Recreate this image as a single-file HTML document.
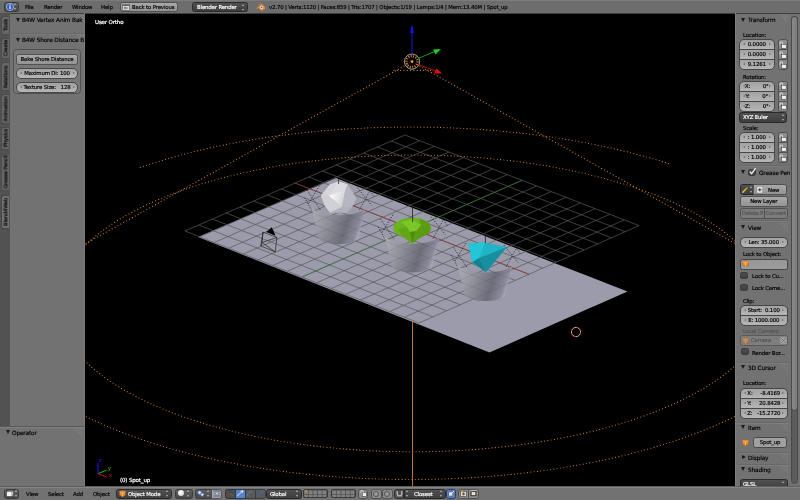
<!DOCTYPE html>
<html><head><meta charset="utf-8"><title>Blender</title>
<style>
html,body{margin:0;padding:0;background:#727272;}
body{width:800px;height:500px;overflow:hidden;position:relative;font-family:"DejaVu Sans","Liberation Sans",sans-serif;font-size:5.4px;letter-spacing:-0.15px;color:#000;line-height:1;-webkit-text-stroke:0.17px currentColor}
div,span{box-sizing:border-box}
.a{position:absolute;white-space:nowrap}
.t{will-change:transform;position:absolute;white-space:nowrap;height:8px;line-height:8px}
.hdr{position:absolute;left:0;width:800px;height:14px;background:#727272}
.panel{position:absolute;background:#727272}
.w{will-change:transform;position:absolute;border:1px solid #474747;text-align:center;white-space:nowrap;overflow:hidden}
.num{background:linear-gradient(#a2a2a2,#b6b6b6);border-radius:5px}
.btn{background:linear-gradient(#a8a8a8,#949494);border-radius:2.5px;border-color:#515151}
.menu{background:linear-gradient(#505050,#3e3e3e);border-radius:2.5px;color:#fff;border-color:#2a2a2a}
.txt{background:linear-gradient(#969696,#9c9c9c);border-radius:2.5px}
.w span{position:absolute;left:0;right:0;top:0;bottom:0;display:block}
.chk{position:absolute;width:8px;height:7.5px;border:1px solid #3c3c3c;border-radius:2px;background:linear-gradient(#4e4e4e,#404040)}
.tab{position:absolute;left:1px;width:8.2px;border:1px solid #4c4c4c;border-right:none;border-radius:2.5px 0 0 2.5px;background:#666}
.tab i{will-change:transform;position:absolute;left:50%;top:50%;font-style:normal;white-space:nowrap;transform:translate(-50%,-50%) rotate(-90deg);font-size:5.2px}
.tri{position:absolute;width:0;height:0;border-left:2.7px solid transparent;border-right:2.7px solid transparent;border-top:4.4px solid #1a1a1a}
.trir{position:absolute;width:0;height:0;border-top:2.4px solid transparent;border-bottom:2.4px solid transparent;border-left:4px solid #1a1a1a}
.sep{position:absolute;height:1px;background:#666}
.grip{position:absolute;width:10px;height:10px;background:repeating-linear-gradient(45deg,transparent 0,transparent 1.5px,#8a8a8a 1.5px,#8a8a8a 2.2px);clip-path:polygon(0 0,100% 0,100% 100%);opacity:.75}
.ud{position:absolute;width:4px;height:8px}
.ud:before,.ud:after{content:"";position:absolute;left:0;border-left:1.8px solid transparent;border-right:1.8px solid transparent}
.ud:before{top:0.5px;border-bottom:2.6px solid #b4b4b4}
.ud:after{bottom:0.5px;border-top:2.6px solid #b4b4b4}
.al,.ar{position:absolute;top:50%;width:0;height:0;margin-top:-1.6px;border-top:1.6px solid transparent;border-bottom:1.6px solid transparent}
.al{left:2.5px;border-right:2.2px solid #6a6a6a}
.ar{right:2.5px;border-left:2.2px solid #6a6a6a}

</style></head>
<body>
<svg id="scene" width="651" height="474" viewBox="85 13 651 474" style="position:absolute;left:85px;top:13px;will-change:transform">
<defs>
<linearGradient id="cg" x1="0" y1="0" x2="1" y2="0.25"><stop offset="0" stop-color="#b0b0b9"/><stop offset="0.35" stop-color="#94949e"/><stop offset="0.72" stop-color="#6e6e7a"/><stop offset="0.93" stop-color="#8a8a9a"/><stop offset="1" stop-color="#a8a8ba"/></linearGradient>
<radialGradient id="sg" cx="0.38" cy="0.38" r="0.7"><stop offset="0" stop-color="#fafafa"/><stop offset="0.45" stop-color="#d4d4d8"/><stop offset="1" stop-color="#9a9aa4"/></radialGradient>
<linearGradient id="sf" x1="0" y1="0.3" x2="1" y2="0.7"><stop offset="0" stop-color="#ffffff"/><stop offset="1" stop-color="#cdcdd2"/></linearGradient>
</defs>
<rect x="85" y="13" width="652" height="474" fill="#000"/>
<polygon points="198,237 336,178 627.5,291.5 489.5,352.5" fill="#9b9bac"/>
<g stroke="#585858" stroke-width="0.7"><line x1="185.0" y1="231.0" x2="419.0" y2="323.0"/><line x1="185.0" y1="231.0" x2="405.0" y2="135.0"/><line x1="198.8" y1="225.0" x2="432.8" y2="316.9"/><line x1="199.6" y1="236.8" x2="419.6" y2="140.7"/><line x1="212.5" y1="219.0" x2="446.5" y2="310.8"/><line x1="214.2" y1="242.5" x2="434.2" y2="146.3"/><line x1="226.2" y1="213.0" x2="460.2" y2="304.7"/><line x1="228.9" y1="248.2" x2="448.9" y2="152.0"/><line x1="240.0" y1="207.0" x2="474.0" y2="298.6"/><line x1="243.5" y1="254.0" x2="463.5" y2="157.7"/><line x1="253.8" y1="201.0" x2="487.8" y2="292.6"/><line x1="258.1" y1="259.8" x2="478.1" y2="163.3"/><line x1="267.5" y1="195.0" x2="501.5" y2="286.5"/><line x1="272.8" y1="265.5" x2="492.8" y2="169.0"/><line x1="281.2" y1="189.0" x2="515.2" y2="280.4"/><line x1="287.4" y1="271.2" x2="507.4" y2="174.6"/><line x1="295.0" y1="183.0" x2="529.0" y2="274.3"/><line x1="302.0" y1="277.0" x2="522.0" y2="180.3"/><line x1="308.8" y1="177.0" x2="542.8" y2="268.2"/><line x1="316.6" y1="282.8" x2="536.6" y2="186.0"/><line x1="322.5" y1="171.0" x2="556.5" y2="262.1"/><line x1="331.2" y1="288.5" x2="551.2" y2="191.6"/><line x1="336.2" y1="165.0" x2="570.2" y2="256.0"/><line x1="345.9" y1="294.2" x2="565.9" y2="197.3"/><line x1="350.0" y1="159.0" x2="584.0" y2="249.9"/><line x1="360.5" y1="300.0" x2="580.5" y2="202.9"/><line x1="363.8" y1="153.0" x2="597.8" y2="243.9"/><line x1="375.1" y1="305.8" x2="595.1" y2="208.6"/><line x1="377.5" y1="147.0" x2="611.5" y2="237.8"/><line x1="389.8" y1="311.5" x2="609.8" y2="214.3"/><line x1="391.2" y1="141.0" x2="625.2" y2="231.7"/><line x1="404.4" y1="317.2" x2="624.4" y2="219.9"/><line x1="405.0" y1="135.0" x2="639.0" y2="225.6"/><line x1="419.0" y1="323.0" x2="639.0" y2="225.6"/></g>
<line x1="295.0" y1="183.0" x2="529.0" y2="274.3" stroke="#9a2a2a" stroke-width="0.65"/>
<line x1="302.0" y1="277.0" x2="522.0" y2="180.3" stroke="#2c7c2c" stroke-width="0.65"/>
<g stroke="#111" stroke-width="0.6" fill="none"><polygon points="263,232.1 277,237.5 275.2,251.9 260.8,246"/><path d="M263,232.1 L262,242.5 L260.8,246 M262,242.5 L277,237.5 M262,242.5 L275.2,251.9"/></g>
<polygon points="271.8,227.2 266.2,232.1 275.6,235.7" fill="#000"/>
<g stroke="#1a1a1a" stroke-width="0.7" stroke-dasharray="1.4 1.4"><line x1="307" y1="190" x2="320.8" y2="210.4"/><line x1="357.4" y1="187.6" x2="371.8" y2="205.6"/><line x1="369.5" y1="191.6" x2="359.5" y2="209.6"/><line x1="319.5" y1="185.6" x2="308.5" y2="203.6"/><line x1="304.5" y1="197.6" x2="312.5" y2="211.6"/><line x1="365.5" y1="183.6" x2="374.5" y2="197.6"/><line x1="380.5" y1="219" x2="394.3" y2="239.4"/><line x1="430.9" y1="216.6" x2="445.3" y2="234.6"/><line x1="443" y1="220.6" x2="433" y2="238.6"/><line x1="393" y1="214.6" x2="382" y2="232.6"/><line x1="378" y1="226.6" x2="386" y2="240.6"/><line x1="439" y1="212.6" x2="448" y2="226.6"/><line x1="453.5" y1="247.4" x2="467.3" y2="267.8"/><line x1="503.9" y1="245" x2="518.3" y2="263"/><line x1="516" y1="249" x2="506" y2="267"/><line x1="466" y1="243" x2="455" y2="261"/><line x1="451" y1="255" x2="459" y2="269"/><line x1="512" y1="241" x2="521" y2="255"/></g>
<polygon points="338.2,181.4 347.8,184.4 356.2,198.2 352.6,206 347,212.5 330,212.5 325,206 320.8,195.8 329.8,184.4" fill="#c4c4cc"/>
<polygon points="329.8,184.4 338.2,181.4 328.6,195.8 320.8,195.8" fill="#d6d6da"/>
<polygon points="338.2,181.4 347.8,184.4 345.4,189.8 328.6,195.8" fill="#dcdce0"/>
<polygon points="328.6,195.8 345.4,189.8 341.8,207.2" fill="url(#sf)"/>
<polygon points="345.4,189.8 347.8,184.4 356.2,198.2 352.6,206 341.8,207.2" fill="#b6b6be"/>
<polygon points="320.8,195.8 328.6,195.8 341.8,207.2 330,212.5 325,206" fill="#cfcfd6"/>
<polygon points="341.8,207.2 352.6,206 347,212.5 330,212.5" fill="#b0b0bc"/>
<path d="M311,205.6 L318.5,237.5 A20,6.7 0 0 0 358.5,237.5 L366,205.6 A27.5,9.6 0 0 1 311,205.6 Z" fill="url(#cg)"/>
<path d="M384.2,234.6 L391.7,266 A20.3,6.4 0 0 0 432.3,266 L439.8,234.6 A27.8,9.2 0 0 1 384.2,234.6 Z" fill="url(#cg)"/>
<path d="M457,263 L464.7,294.7 A20.3,6.3 0 0 0 505.3,294.7 L513,263 A28,9.6 0 0 1 457,263 Z" fill="url(#cg)"/>
<clipPath id="cc"><path d="M311,205.6 L318.5,237.5 A20,6.7 0 0 0 358.5,237.5 L366,205.6 A27.5,9.6 0 0 1 311,205.6 Z"/><path d="M384.2,234.6 L391.7,266 A20.3,6.4 0 0 0 432.3,266 L439.8,234.6 A27.8,9.2 0 0 1 384.2,234.6 Z"/><path d="M457,263 L464.7,294.7 A20.3,6.3 0 0 0 505.3,294.7 L513,263 A28,9.6 0 0 1 457,263 Z"/></clipPath>
<g stroke="#2c2c34" stroke-width="0.6" stroke-opacity="0.16" clip-path="url(#cc)"><line x1="185.0" y1="231.0" x2="419.0" y2="323.0"/><line x1="185.0" y1="231.0" x2="405.0" y2="135.0"/><line x1="198.8" y1="225.0" x2="432.8" y2="316.9"/><line x1="199.6" y1="236.8" x2="419.6" y2="140.7"/><line x1="212.5" y1="219.0" x2="446.5" y2="310.8"/><line x1="214.2" y1="242.5" x2="434.2" y2="146.3"/><line x1="226.2" y1="213.0" x2="460.2" y2="304.7"/><line x1="228.9" y1="248.2" x2="448.9" y2="152.0"/><line x1="240.0" y1="207.0" x2="474.0" y2="298.6"/><line x1="243.5" y1="254.0" x2="463.5" y2="157.7"/><line x1="253.8" y1="201.0" x2="487.8" y2="292.6"/><line x1="258.1" y1="259.8" x2="478.1" y2="163.3"/><line x1="267.5" y1="195.0" x2="501.5" y2="286.5"/><line x1="272.8" y1="265.5" x2="492.8" y2="169.0"/><line x1="281.2" y1="189.0" x2="515.2" y2="280.4"/><line x1="287.4" y1="271.2" x2="507.4" y2="174.6"/><line x1="295.0" y1="183.0" x2="529.0" y2="274.3"/><line x1="302.0" y1="277.0" x2="522.0" y2="180.3"/><line x1="308.8" y1="177.0" x2="542.8" y2="268.2"/><line x1="316.6" y1="282.8" x2="536.6" y2="186.0"/><line x1="322.5" y1="171.0" x2="556.5" y2="262.1"/><line x1="331.2" y1="288.5" x2="551.2" y2="191.6"/><line x1="336.2" y1="165.0" x2="570.2" y2="256.0"/><line x1="345.9" y1="294.2" x2="565.9" y2="197.3"/><line x1="350.0" y1="159.0" x2="584.0" y2="249.9"/><line x1="360.5" y1="300.0" x2="580.5" y2="202.9"/><line x1="363.8" y1="153.0" x2="597.8" y2="243.9"/><line x1="375.1" y1="305.8" x2="595.1" y2="208.6"/><line x1="377.5" y1="147.0" x2="611.5" y2="237.8"/><line x1="389.8" y1="311.5" x2="609.8" y2="214.3"/><line x1="391.2" y1="141.0" x2="625.2" y2="231.7"/><line x1="404.4" y1="317.2" x2="624.4" y2="219.9"/><line x1="405.0" y1="135.0" x2="639.0" y2="225.6"/><line x1="419.0" y1="323.0" x2="639.0" y2="225.6"/></g>
<line x1="338.6" y1="177.5" x2="338.6" y2="184" stroke="#111" stroke-width="0.7"/>
<path d="M393.6,228 A18.6,10.3 0 0 1 430.8,228 A18.6,9 0 0 1 422,236.2 L412.2,243.4 L402.4,236.2 A18.6,9 0 0 1 393.6,228 Z" fill="#6cb41c"/>
<path d="M419,218.6 A18.6,10.3 0 0 1 430.8,228 A18.6,9 0 0 1 422,236.2 L412.2,243.4 L416,231 L421,225 Z" fill="#5b9c14"/>
<polygon points="398,229 407,227 410,232 412.2,243.4 402.4,236.2" fill="#62a618"/>
<polygon points="401,222 412,219.5 421,225 416,231 410,232 407,227" fill="#7cc628"/>
<polygon points="410,232 416,231 412.2,243.4" fill="#4f8c10"/>
<line x1="412.5" y1="205.8" x2="412.5" y2="222" stroke="#111" stroke-width="0.7"/>
<polygon points="468.4,243.4 485,242.5 507,247 485.9,272.2 472.4,262.3" fill="#1fb4c6"/>
<polygon points="468.4,243.4 485,242.5 479,258 472.4,262.3" fill="#22c6d6"/>
<polygon points="479,258 507,247 485.9,272.2" fill="#178f9f"/>
<polygon points="479,258 472.4,262.3 485.9,272.2" fill="#15808f"/>
<line x1="485.4" y1="236" x2="485.4" y2="243" stroke="#111" stroke-width="0.7"/>
<g fill="none" stroke="#d07f2b" stroke-width="1.15" stroke-linecap="round" stroke-dasharray="0.01 3.3">
<path d="M767.9,303.4 L767.6,297.5 L766.8,291.7 L765.4,285.9 L763.5,280.1 L761.1,274.4 L758.1,268.7 L754.6,263.1 L750.5,257.5 L745.9,252.0 L740.8,246.6 L735.3,241.2 L729.2,236.0 L722.6,230.8 L715.5,225.8 L708.0,220.9 L700.0,216.1 L691.6,211.5 L682.7,207.0 L673.5,202.6 L663.8,198.4 L653.7,194.4 L643.3,190.5 L632.5,186.8 L621.4,183.3 L609.9,180.0 L598.2,176.8 L586.2,173.9 L573.8,171.1 L561.3,168.6 L548.5,166.2 L535.5,164.1 L522.3,162.2 L509.0,160.5 L495.5,159.1 L481.8,157.8 L468.1,156.8 L454.3,156.0 L440.4,155.4 L426.5,155.1 L412.5,155.0 L398.5,155.1 L384.6,155.4 L370.7,156.0 L356.9,156.8 L343.2,157.8 L329.5,159.1 L316.0,160.5 L302.7,162.2 L289.5,164.1 L276.5,166.2 L263.7,168.6 L251.2,171.1 L238.8,173.9 L226.8,176.8 L215.1,180.0 L203.6,183.3 L192.5,186.8 L181.7,190.5 L171.3,194.4 L161.2,198.4 L151.5,202.6 L142.3,207.0 L133.4,211.5 L125.0,216.1 L117.0,220.9 L109.5,225.8 L102.4,230.8 L95.8,236.0 L89.7,241.2 L84.2,246.6 L79.1,252.0 L74.5,257.5 L70.4,263.1 L66.9,268.7 L63.9,274.4 L61.5,280.1 L59.6,285.9 L58.2,291.7 L57.4,297.5 L57.1,303.4 L57.4,309.2 L58.2,315.0 L59.6,320.8 L61.5,326.6 L63.9,332.3 L66.9,338.0 L70.4,343.6 L74.5,349.2 L79.1,354.7 L84.2,360.1 L89.7,365.5 L95.8,370.7 L102.4,375.9 L109.5,380.9 L117.0,385.8 L125.0,390.6 L133.4,395.2 L142.3,399.7 L151.5,404.1 L161.2,408.3 L171.3,412.3 L181.7,416.2 L192.5,419.9 L203.6,423.4 L215.1,426.7 L226.8,429.9 L238.8,432.8 L251.2,435.6 L263.7,438.1 L276.5,440.5 L289.5,442.6 L302.7,444.5 L316.0,446.2 L329.5,447.6 L343.2,448.9 L356.9,449.9 L370.7,450.7 L384.6,451.3 L398.5,451.6 L412.5,451.8 L426.5,451.6 L440.4,451.3 L454.3,450.7 L468.1,449.9 L481.8,448.9 L495.5,447.6 L509.0,446.2 L522.3,444.5 L535.5,442.6 L548.5,440.5 L561.3,438.1 L573.8,435.6 L586.2,432.8 L598.2,429.9 L609.9,426.7 L621.4,423.4 L632.5,419.9 L643.3,416.2 L653.7,412.3 L663.8,408.3 L673.5,404.1 L682.7,399.7 L691.6,395.2 L700.0,390.6 L708.0,385.8 L715.5,380.9 L722.6,375.9 L729.2,370.7 L735.3,365.5 L740.8,360.1 L745.9,354.7 L750.5,349.2 L754.6,343.6 L758.1,338.0 L761.1,332.3 L763.5,326.6 L765.4,320.8 L766.8,315.0 L767.6,309.2 L767.9,303.4"/>
<path d="M668.7,163.6 L661.0,161.2 L653.3,158.9 L645.4,156.7 L637.4,154.5 L629.3,152.4 L621.0,150.4 L612.7,148.5 L604.3,146.6 L595.7,144.8 L587.1,143.1 L578.4,141.5 L569.6,140.0 L560.7,138.5 L551.7,137.1 L542.7,135.9 L533.6,134.7 L524.4,133.5 L515.2,132.5 L505.9,131.6 L496.6,130.7 L487.2,129.9 L477.8,129.3 L468.4,128.7 L458.9,128.2 L449.4,127.8 L439.9,127.4 L430.3,127.2 L420.8,127.1 L411.2,127.0 L401.7,127.0 L392.2,127.2 L382.6,127.4 L373.1,127.7 L363.6,128.1 L354.1,128.6 L344.7,129.1 L335.2,129.8 L325.9,130.5 L316.5,131.4 L307.2,132.3 L298.0,133.3 L288.8,134.4 L279.7,135.6 L270.7,136.8 L261.7,138.2 L252.8,139.6 L243.9,141.2 L235.2,142.8 L226.6,144.4 L218.0,146.2 L209.5,148.0 L201.2,150.0 L192.9,152.0 L184.8,154.0 L176.8,156.2 L168.9,158.4 L161.1,160.7 L153.4,163.1 L145.9,165.5 L138.5,168.0"/>
<path d="M-13.4,303.2 L-13.2,308.8 L-12.6,314.3 L-11.5,319.8 L-10.1,325.3 L-8.2,330.8 L-5.9,336.3 L-3.2,341.7 L-0.1,347.1 L3.4,352.4 L7.3,357.7 L11.6,362.9 L16.3,368.1 L21.4,373.2 L26.9,378.3 L32.8,383.3 L39.0,388.2 L45.6,393.0 L52.5,397.7 L59.8,402.3 L67.5,406.8 L75.5,411.3 L83.8,415.6 L92.5,419.8 L101.4,423.9 L110.7,427.9 L120.2,431.7 L130.1,435.4 L140.2,439.0 L150.6,442.5 L161.2,445.8 L172.1,449.0 L183.2,452.1 L194.6,454.9 L206.1,457.7 L217.9,460.3 L229.8,462.7 L242.0,465.0 L254.3,467.1 L266.7,469.1 L279.3,470.9 L292.0,472.5 L304.9,474.0 L317.8,475.2 L330.8,476.4 L343.9,477.3 L357.1,478.1 L370.3,478.7 L383.6,479.1 L396.9,479.4 L410.2,479.5 L423.5,479.4 L436.8,479.1 L450.1,478.7 L463.3,478.1 L476.5,477.3 L489.6,476.4 L502.6,475.2 L515.5,474.0 L528.4,472.5 L541.1,470.9 L553.7,469.1 L566.1,467.1 L578.4,465.0 L590.6,462.7 L602.5,460.3 L614.3,457.7 L625.8,454.9 L637.2,452.1 L648.3,449.0 L659.2,445.8 L669.8,442.5 L680.2,439.0 L690.3,435.4 L700.2,431.7 L709.7,427.9 L719.0,423.9 L727.9,419.8 L736.6,415.6 L744.9,411.3 L752.9,406.8 L760.6,402.3 L767.9,397.7 L774.8,393.0 L781.4,388.2 L787.6,383.3 L793.5,378.3 L799.0,373.2 L804.1,368.1 L808.8,362.9 L813.1,357.7 L817.0,352.4 L820.5,347.1 L823.6,341.7 L826.3,336.3 L828.6,330.8 L830.5,325.3 L831.9,319.8 L833.0,314.3 L833.6,308.8 L833.8,303.3"/>
<path d="M407,64.5 L85,244"/><path d="M417,64.5 L736,244"/><path d="M394,70.4 L432,70.4"/>
</g>
<line x1="412.5" y1="322" x2="412.5" y2="487" stroke="#b97629" stroke-width="1"/>
<circle cx="412" cy="61.6" r="5.5" fill="none" stroke="#d07f2b" stroke-width="2.5" stroke-dasharray="1 1.4"/>
<circle cx="412" cy="61.6" r="1.4" fill="#f0a040"/>
<circle cx="412" cy="61.6" r="7.6" fill="none" stroke="#ddd" stroke-width="0.7"/>
<line x1="412" y1="54" x2="412" y2="30" stroke="#1414d8" stroke-width="1"/><polygon points="412,24 410,33 414,33" fill="#1010f0"/>
<line x1="418" y1="58.5" x2="436" y2="51" stroke="#10b010" stroke-width="0.9"/><polygon points="441,49 433,49.5 435.5,54.5" fill="#18d018"/>
<line x1="418" y1="64.5" x2="436" y2="71" stroke="#c01010" stroke-width="0.9"/><polygon points="442,73.5 434,73.5 436.5,68.5" fill="#e01010"/>
<circle cx="576" cy="332" r="4.6" fill="none" stroke="#eee" stroke-width="0.8"/>
<circle cx="576" cy="332" r="4.6" fill="none" stroke="#e01818" stroke-width="0.9" stroke-dasharray="1.8 1.8"/>
<line x1="98" y1="473.7" x2="98" y2="462.5" stroke="#1616e0" stroke-width="1.2"/>
<line x1="98" y1="473.7" x2="106.5" y2="470.2" stroke="#10c010" stroke-width="1"/>
<line x1="98" y1="473.7" x2="106.5" y2="477" stroke="#d01010" stroke-width="1"/>
<g font-family="DejaVu Sans,Liberation Sans,sans-serif" font-size="5.5">
<text x="98.8" y="461.8" fill="#2020f0">z</text><text x="107.8" y="469.5" fill="#18c018">y</text><text x="108.8" y="476.5" fill="#d01818">x</text>
<text x="120" y="481.6" fill="#fff" stroke="#fff" stroke-width="0.2" letter-spacing="-0.15">(0) Spot_up</text>
<text x="95" y="23.6" fill="#fff" stroke="#fff" stroke-width="0.2" letter-spacing="-0.15">User Ortho</text>
</g>
</svg>
<div class="hdr" style="top:0;background:#6d6d6d;border-top:1px solid #7b7b7b;border-bottom:1px solid #3e3e3e"></div>
<div class="w menu" style="left:4px;top:2px;width:14.8px;height:9.5px;line-height:7.5px;background:linear-gradient(#5e5e5e,#4a4a4a);border-color:#3a3a3a"></div>
<svg class="a" style="left:5.5px;top:2.8px" width="8" height="8" viewBox="0 0 8 8"><circle cx="4" cy="4" r="3.6" fill="#2f5fc8" stroke="#dde" stroke-width="0.6"/><rect x="3.4" y="3.3" width="1.2" height="2.8" fill="#fff"/><rect x="3.4" y="1.6" width="1.2" height="1.1" fill="#fff"/></svg>
<div class="ud" style="left:14.3px;top:2.8px"></div>
<div class="t" style="left:25px;top:3.3px;">File</div>
<div class="t" style="left:44px;top:3.3px;">Render</div>
<div class="t" style="left:72px;top:3.3px;">Window</div>
<div class="t" style="left:101px;top:3.3px;">Help</div>
<div class="w btn" style="left:119.5px;top:2px;width:58px;height:9.5px;line-height:7.5px;"></div>
<svg class="a" style="left:121.5px;top:3.5px" width="8" height="7" viewBox="0 0 8 7"><rect x="0.5" y="0.6" width="7" height="5.8" fill="#d8d8d8" stroke="#555" stroke-width="0.6"/><rect x="0.5" y="0.6" width="7" height="1.4" fill="#666"/><path d="M5.8,4 H2.4 M3.6,2.9 L2.4,4 L3.6,5.1" fill="none" stroke="#333" stroke-width="0.7"/></svg>
<div class="t" style="left:131.5px;top:3.3px;">Back to Previous</div>
<div class="w menu" style="left:191.5px;top:2px;width:56px;height:9.5px;line-height:7.5px;"></div>
<div class="t" style="left:196.5px;top:3.3px;color:#fff;">Blender Render</div>
<div class="ud" style="left:241.5px;top:3px"></div>
<svg class="a" style="left:256px;top:2.5px" width="9" height="8" viewBox="0 0 9 8"><path d="M0.3,5.3 L4.2,2.2 L2.2,2.2 L2.2,1.5 L5.2,1.5 L4.4,0.6 L5.2,0.2 L8.4,3.2 A3,2.7 0 1 1 3.1,4.6 L1.2,6.1 Z" fill="#e8842a"/><circle cx="5.6" cy="4.4" r="1.7" fill="#f4f4f4"/><circle cx="5.6" cy="4.4" r="0.9" fill="#2a5fa8"/></svg>
<div class="t" style="left:269px;top:3.3px;">v2.70 | Verts:1120 | Faces:859 | Tris:1707 | Objects:1/19 | Lamps:1/4 | Mem:13.40M | Spot_up</div>
<div class="a" style="left:0px;top:13px;width:85px;height:473px;overflow:hidden;">
<div class="a" style="left:0;top:0px;width:10px;height:413px;background:#525252"></div>
<div class="tab" style="top:2.5px;height:19px;"><i>Tools</i></div>
<div class="tab" style="top:24.5px;height:21.5px;"><i>Create</i></div>
<div class="tab" style="top:49px;height:29px;"><i>Relations</i></div>
<div class="tab" style="top:81px;height:29.8px;"><i>Animation</i></div>
<div class="tab" style="top:113.8px;height:23.2px;"><i>Physics</i></div>
<div class="tab" style="top:140.6px;height:37.2px;"><i>Grease Pencil</i></div>
<div class="tab" style="top:181.5px;height:34px;background:#727272;border-color:#444;"><i>Blend4Web</i></div>
<div class="grip" style="left:74px;top:1px"></div>
<div class="tri" style="left:15.5px;top:5px"></div>
<div class="t" style="left:22px;top:3px;font-size:5.8px;">B4W Vertex Anim Bak</div>
<div class="sep" style="left:12px;top:20px;width:70px;background:#686868"></div>
<div class="sep" style="left:12px;top:21px;width:70px;background:#7b7b7b"></div>
<div class="grip" style="left:74px;top:20.5px"></div>
<div class="tri" style="left:15.5px;top:24.5px"></div>
<div class="t" style="left:22px;top:22.5px;font-size:5.8px;">B4W Shore Distance B</div>
<div class="a" style="left:13px;top:36px;width:68px;height:44.5px;border:1px solid #505050;border-radius:3.5px;background:#787878"></div>
<div class="w btn" style="left:16px;top:40.5px;width:62px;height:10.5px;line-height:8.5px;">Bake Shore Distance</div>
<div class="w num" style="left:16px;top:54.5px;width:62px;height:10.5px;line-height:8.5px;"><b class="al"></b><b class="ar"></b>Maximum Di: 100</div>
<div class="w num" style="left:16px;top:68.5px;width:62px;height:10.5px;line-height:8.5px;"><b class="al"></b><b class="ar"></b>Texture Size:&nbsp;&nbsp; 128</div>
<div class="a" style="left:84px;top:0px;width:1px;height:473px;background:#7c7c7c"></div>
<div class="sep" style="left:0px;top:412.5px;width:85px;background:#585858"></div>
<div class="sep" style="left:0px;top:413.5px;width:85px;background:#808080"></div>
<div class="tri" style="left:5.5px;top:417px"></div>
<div class="t" style="left:12px;top:415.6px;font-size:5.8px;">Operator</div>
<div class="grip" style="left:72px;top:414.5px"></div>
</div>
<div class="hdr" style="top:486px;height:14px;border-top:1px solid #5e5e5e"></div><div class="hdr" style="top:487px;height:13px;border-top:1px solid #868686"></div>
<div class="w menu" style="left:4px;top:488.5px;width:15px;height:9.5px;line-height:7.5px;background:linear-gradient(#5e5e5e,#4a4a4a);border-color:#3a3a3a"></div>
<svg class="a" style="left:6px;top:490px" width="8" height="7" viewBox="0 0 8 7"><path d="M0.5,1.5 L2,0.4 H7.5 V5.2 L6,6.5 H0.5 Z" fill="#f4f4f4" stroke="#222" stroke-width="0.5"/><path d="M0.5,1.5 H6 V6.5 M6,1.5 L7.5,0.4" fill="none" stroke="#222" stroke-width="0.5"/></svg>
<div class="ud" style="left:14.5px;top:489.5px"></div>
<div class="t" style="left:25.6px;top:490px;">View</div>
<div class="t" style="left:47.6px;top:490px;">Select</div>
<div class="t" style="left:72.8px;top:490px;">Add</div>
<div class="t" style="left:92.6px;top:490px;">Object</div>
<div class="w menu" style="left:116px;top:488.5px;width:56px;height:9.5px;line-height:7.5px;"></div>
<svg class="a" style="left:118.5px;top:490px" width="7" height="7" viewBox="0 0 7 7"><path d="M3.5,0.3 L6.6,1.6 V5.3 L3.5,6.7 L0.4,5.3 V1.6 Z" fill="#e88a30" stroke="#8a4a10" stroke-width="0.4"/><path d="M0.4,1.6 L3.5,3 L6.6,1.6 M3.5,3 V6.7" fill="none" stroke="#fbd9a8" stroke-width="0.5"/></svg>
<div class="t" style="left:127.5px;top:490px;color:#fff;">Object Mode</div>
<div class="ud" style="left:166px;top:489.5px"></div>
<div class="w menu" style="left:174.5px;top:488.5px;width:18px;height:9.5px;line-height:7.5px;background:linear-gradient(#5e5e5e,#4a4a4a);border-color:#3a3a3a"></div>
<div class="a" style="left:178px;top:490.3px;width:6px;height:6px;border-radius:3px;background:radial-gradient(circle at 40% 35%,#fff,#ccc)"></div>
<div class="ud" style="left:187.2px;top:489.5px"></div>
<div class="w menu" style="left:194.5px;top:488.5px;width:17px;height:9.5px;line-height:7.5px;background:linear-gradient(#5e5e5e,#4a4a4a);border-color:#3a3a3a;border-radius:2.5px 0 0 2.5px"></div>
<svg class="a" style="left:197px;top:490px" width="8" height="7" viewBox="0 0 8 7"><circle cx="2.6" cy="2.6" r="1.8" fill="#dfe8f4" stroke="#3a6ab8" stroke-width="0.7"/><circle cx="5.2" cy="4.6" r="1.6" fill="#dfe8f4" stroke="#3a6ab8" stroke-width="0.7"/></svg>
<div class="ud" style="left:206.5px;top:489.5px"></div>
<div class="w btn" style="left:210.5px;top:488.5px;width:11px;height:9.5px;line-height:7.5px;background:#a2a2a2;border-radius:0 2.5px 2.5px 0"></div>
<svg class="a" style="left:212.5px;top:490px" width="8" height="7" viewBox="0 0 8 7"><path d="M0.5,1 H7.5 M0.5,6 H7.5 M1.5,3.5 H6.5" stroke="#3a5a9a" stroke-width="0.8"/><circle cx="4" cy="3.5" r="1.4" fill="#dde" stroke="#345" stroke-width="0.4"/></svg>
<div class="w btn" style="left:225px;top:488.5px;width:10.5px;height:9.5px;line-height:7.5px;border-radius:2.5px 0 0 2.5px;background:#4c4c4c;border-color:#333"></div>
<svg class="a" style="left:226.3px;top:489.3px" width="8" height="8" viewBox="0 0 8 8"><path d="M4,4.6 V0.8" stroke="#2030d0" stroke-width="0.9"/><path d="M4,4.6 L0.8,7" stroke="#d02020" stroke-width="0.9"/><path d="M4,4.6 L7.2,7" stroke="#20a020" stroke-width="0.9"/></svg>
<div class="w btn" style="left:234.5px;top:488.5px;width:11px;height:9.5px;line-height:7.5px;border-radius:0;background:#5a82c4;border-color:#2a3a5a"></div>
<svg class="a" style="left:236px;top:490px" width="8" height="7" viewBox="0 0 8 7"><path d="M1,6.2 L6.8,0.8 M6.8,0.8 L4.6,1.2 M6.8,0.8 L6.4,3" stroke="#eef" stroke-width="0.9" fill="none"/></svg>
<div class="w btn" style="left:244.5px;top:488.5px;width:11px;height:9.5px;line-height:7.5px;border-radius:0;background:#5a5a5a;border-color:#3a3a3a"></div>
<svg class="a" style="left:246px;top:490px" width="8" height="7" viewBox="0 0 8 7"><path d="M1.2,6 A5,5 0 0 1 6.5,1.2" stroke="#4a78c8" stroke-width="1" fill="none"/></svg>
<div class="w btn" style="left:254.5px;top:488.5px;width:10.5px;height:9.5px;line-height:7.5px;border-radius:0 2.5px 2.5px 0;background:#5a5a5a;border-color:#3a3a3a"></div>
<svg class="a" style="left:256px;top:490px" width="8" height="7" viewBox="0 0 8 7"><path d="M1,6.2 L6,1.6" stroke="#3a68b8" stroke-width="0.9"/><rect x="5" y="0.6" width="2.2" height="2.2" fill="#3a68b8"/></svg>
<div class="w menu" style="left:265.5px;top:488.5px;width:35.5px;height:9.5px;line-height:7.5px;"></div>
<div class="t" style="left:269.5px;top:490px;color:#fff;">Global</div>
<div class="ud" style="left:295.5px;top:489.5px"></div>
<div class="a" style="left:302.5px;top:488.5px;width:25px;height:9.5px;border:1px solid #3a3a3a;border-radius:2px;background:#808080;background-image:linear-gradient(90deg,#555 0.7px,transparent 0.7px),linear-gradient(#555 0.7px,transparent 0.7px);background-size:4.6px 100%,100% 4.2px;background-position:3.9px 0,0 3.9px"></div>
<div class="a" style="left:330.5px;top:488.5px;width:25px;height:9.5px;border:1px solid #3a3a3a;border-radius:2px;background:#808080;background-image:linear-gradient(90deg,#555 0.7px,transparent 0.7px),linear-gradient(#555 0.7px,transparent 0.7px);background-size:4.6px 100%,100% 4.2px;background-position:3.9px 0,0 3.9px"></div>
<div class="a" style="left:304.5px;top:490px;width:2px;height:2px;border-radius:1px;background:#e88a30"></div>
<div class="w btn" style="left:358.2px;top:488.5px;width:9.5px;height:9.5px;line-height:7.5px;background:#8a8a8a"></div>
<svg class="a" style="left:359.7px;top:490px" width="7" height="7" viewBox="0 0 7 7"><rect x="2.6" y="2.8" width="3.6" height="3.4" fill="#eee" stroke="#333" stroke-width="0.4"/><path d="M0.8,3 V1.6 A1.2,1.2 0 0 1 3.2,1.6 V2.8" fill="none" stroke="#eee" stroke-width="0.7"/></svg>
<div class="w btn" style="left:370.5px;top:488.5px;width:10.5px;height:9.5px;line-height:7.5px;background:#8a8a8a"></div>
<div class="a" style="left:372.7px;top:490.5px;width:6px;height:6px;border-radius:3px;border:0.8px solid #555;background:#9a9a9a"></div>
<div class="w btn" style="left:382px;top:488.5px;width:10.5px;height:9.5px;line-height:7.5px;background:#8a8a8a"></div>
<div class="a" style="left:384.2px;top:490.5px;width:6px;height:6px;border-radius:3px;border:0.8px solid #555;background:#9a9a9a"></div>
<div class="w btn" style="left:394.3px;top:488.5px;width:10px;height:9.5px;line-height:7.5px;background:#4e4e4e;border-color:#333;border-radius:2.5px 0 0 2.5px"></div>
<svg class="a" style="left:395.5px;top:490px" width="7" height="7" viewBox="0 0 7 7"><path d="M1.2,1 V3.6 A2.3,2.3 0 0 0 5.8,3.6 V1" fill="none" stroke="#b8b8b8" stroke-width="1.3"/><path d="M0.4,6.4 H6.6" stroke="#888" stroke-width="0.5"/></svg>
<div class="w menu" style="left:403.5px;top:488.5px;width:41.8px;height:9.5px;line-height:7.5px;border-radius:0 2.5px 2.5px 0"></div>
<div class="ud" style="left:405.5px;top:489.5px"></div>
<div class="t" style="left:414px;top:490px;color:#fff;">Closest</div>
<div class="ud" style="left:440px;top:489.5px"></div>
<div class="w btn" style="left:446px;top:488.5px;width:9.5px;height:9.5px;line-height:7.5px;background:#5a7fc0;border-color:#2a3a5a"></div>
<svg class="a" style="left:447.5px;top:490px" width="7" height="7" viewBox="0 0 7 7"><rect x="0.8" y="2" width="4" height="4" fill="#dde" stroke="#345" stroke-width="0.4"/><path d="M3,4 L6.2,0.8" stroke="#fff" stroke-width="0.8"/></svg>
<div class="w btn" style="left:458px;top:488.5px;width:10.5px;height:9.5px;line-height:7.5px;background:#8a8a8a;border-radius:2.5px 0 0 2.5px"></div>
<svg class="a" style="left:459.8px;top:490px" width="7" height="7" viewBox="0 0 7 7"><rect x="0.6" y="1.6" width="5.8" height="4.6" fill="#e8e0c8" stroke="#333" stroke-width="0.5"/><circle cx="3.5" cy="3.9" r="1.3" fill="#556"/><rect x="1" y="0.6" width="2" height="1.2" fill="#c8a040"/></svg>
<div class="w btn" style="left:467.5px;top:488.5px;width:10.5px;height:9.5px;line-height:7.5px;background:#8a8a8a;border-radius:0 2.5px 2.5px 0"></div>
<svg class="a" style="left:469.5px;top:490px" width="7" height="7" viewBox="0 0 7 7"><rect x="0.5" y="1" width="6" height="5.2" fill="#333"/><rect x="1.6" y="2" width="3.8" height="3.2" fill="#e8e0c8"/><path d="M0.5,1 L6.5,0.3" stroke="#ddd" stroke-width="0.7"/></svg>
<div class="a" style="left:735px;top:13px;width:65px;height:473px;overflow:hidden;">
<div class="a" style="left:0px;top:0px;width:1px;height:473px;background:#7e7e7e"></div>
<div class="a" style="left:56px;top:2.5px;width:7px;height:468px;border-radius:4px;background:#5c5c5c;border:1px solid #484848"></div>
<div class="a" style="left:56px;top:2.5px;width:7px;height:395px;border-radius:4px;background:linear-gradient(90deg,#878787,#7c7c7c);border:1px solid #4a4a4a"></div>
<div class="tri" style="left:6px;top:4.5px"></div>
<div class="t" style="left:13px;top:3px;font-size:5.8px;">Transform</div>
<div class="grip" style="left:42.5px;top:1px"></div>
<div class="t" style="left:8px;top:18px;">Location:</div>
<div class="w num" style="left:4px;top:26px;width:35.5px;height:11.1px;line-height:9.1px;border-radius:5px 5px 0 0;"><b class="al"></b><b class="ar"></b>0.0000</div>
<div class="w num" style="left:4px;top:36.1px;width:35.5px;height:11.1px;line-height:9.1px;border-radius:0;"><b class="al"></b><b class="ar"></b>0.0000</div>
<div class="w num" style="left:4px;top:46.2px;width:35.5px;height:11.1px;line-height:9.1px;border-radius:0 0 5px 5px;"><b class="al"></b><b class="ar"></b>9.1261</div>
<div class="t" style="left:8px;top:59.5px;">Rotation:</div>
<div class="w num" style="left:4px;top:67.5px;width:35.5px;height:11.1px;line-height:9.1px;border-radius:5px 5px 0 0;"><b class="al"></b><b class="ar"></b>X:&nbsp;&nbsp;&nbsp;&nbsp;&nbsp;&nbsp;&nbsp; 0°</div>
<div class="w num" style="left:4px;top:77.6px;width:35.5px;height:11.1px;line-height:9.1px;border-radius:0;"><b class="al"></b><b class="ar"></b>Y:&nbsp;&nbsp;&nbsp;&nbsp;&nbsp;&nbsp;&nbsp; 0°</div>
<div class="w num" style="left:4px;top:87.7px;width:35.5px;height:11.1px;line-height:9.1px;border-radius:0 0 5px 5px;"><b class="al"></b><b class="ar"></b>Z:&nbsp;&nbsp;&nbsp;&nbsp;&nbsp;&nbsp;&nbsp; 0°</div>
<div class="w menu" style="left:4px;top:99px;width:48px;height:10.5px;line-height:8.5px;"></div>
<div class="t" style="left:7.5px;top:100.3px;color:#fff;">XYZ Euler</div>
<div class="ud" style="left:47px;top:100px"></div>
<div class="t" style="left:8px;top:111px;">Scale:</div>
<div class="w num" style="left:4px;top:119px;width:35.5px;height:11.1px;line-height:9.1px;border-radius:5px 5px 0 0;"><b class="al"></b><b class="ar"></b>: 1.000</div>
<div class="w num" style="left:4px;top:129.1px;width:35.5px;height:11.1px;line-height:9.1px;border-radius:0;"><b class="al"></b><b class="ar"></b>: 1.000</div>
<div class="w num" style="left:4px;top:139.2px;width:35.5px;height:11.1px;line-height:9.1px;border-radius:0 0 5px 5px;"><b class="al"></b><b class="ar"></b>: 1.000</div>
<div class="w btn" style="left:43px;top:26px;width:9.5px;height:11px;line-height:9px;border-radius:2.5px 2.5px 0 0;background:#8c8c8c"></div>
<svg class="a" style="left:43.8px;top:27.5px" width="8" height="8" viewBox="0 0 8 8"><rect x="2.6" y="3.4" width="4.6" height="3.8" fill="#f0f0f0" stroke="#333" stroke-width="0.5"/><path d="M1,3.6 V2.2 A1.3,1.3 0 0 1 3.6,2.2 V3.4" fill="none" stroke="#f0f0f0" stroke-width="0.8"/></svg>
<div class="w btn" style="left:43px;top:36.1px;width:9.5px;height:11px;line-height:9px;border-radius:0;background:#8c8c8c"></div>
<svg class="a" style="left:43.8px;top:37.6px" width="8" height="8" viewBox="0 0 8 8"><rect x="2.6" y="3.4" width="4.6" height="3.8" fill="#f0f0f0" stroke="#333" stroke-width="0.5"/><path d="M1,3.6 V2.2 A1.3,1.3 0 0 1 3.6,2.2 V3.4" fill="none" stroke="#f0f0f0" stroke-width="0.8"/></svg>
<div class="w btn" style="left:43px;top:46.2px;width:9.5px;height:11px;line-height:9px;border-radius:0 0 2.5px 2.5px;background:#8c8c8c"></div>
<svg class="a" style="left:43.8px;top:47.7px" width="8" height="8" viewBox="0 0 8 8"><rect x="2.6" y="3.4" width="4.6" height="3.8" fill="#f0f0f0" stroke="#333" stroke-width="0.5"/><path d="M1,3.6 V2.2 A1.3,1.3 0 0 1 3.6,2.2 V3.4" fill="none" stroke="#f0f0f0" stroke-width="0.8"/></svg>
<div class="w btn" style="left:43px;top:67.5px;width:9.5px;height:11px;line-height:9px;border-radius:2.5px 2.5px 0 0;background:#8c8c8c"></div>
<svg class="a" style="left:43.8px;top:69px" width="8" height="8" viewBox="0 0 8 8"><rect x="2.6" y="3.4" width="4.6" height="3.8" fill="#f0f0f0" stroke="#333" stroke-width="0.5"/><path d="M1,3.6 V2.2 A1.3,1.3 0 0 1 3.6,2.2 V3.4" fill="none" stroke="#f0f0f0" stroke-width="0.8"/></svg>
<div class="w btn" style="left:43px;top:77.6px;width:9.5px;height:11px;line-height:9px;border-radius:0;background:#8c8c8c"></div>
<svg class="a" style="left:43.8px;top:79.1px" width="8" height="8" viewBox="0 0 8 8"><rect x="2.6" y="3.4" width="4.6" height="3.8" fill="#f0f0f0" stroke="#333" stroke-width="0.5"/><path d="M1,3.6 V2.2 A1.3,1.3 0 0 1 3.6,2.2 V3.4" fill="none" stroke="#f0f0f0" stroke-width="0.8"/></svg>
<div class="w btn" style="left:43px;top:87.7px;width:9.5px;height:11px;line-height:9px;border-radius:0 0 2.5px 2.5px;background:#8c8c8c"></div>
<svg class="a" style="left:43.8px;top:89.2px" width="8" height="8" viewBox="0 0 8 8"><rect x="2.6" y="3.4" width="4.6" height="3.8" fill="#f0f0f0" stroke="#333" stroke-width="0.5"/><path d="M1,3.6 V2.2 A1.3,1.3 0 0 1 3.6,2.2 V3.4" fill="none" stroke="#f0f0f0" stroke-width="0.8"/></svg>
<div class="w btn" style="left:43px;top:119px;width:9.5px;height:11px;line-height:9px;border-radius:2.5px 2.5px 0 0;background:#8c8c8c"></div>
<svg class="a" style="left:43.8px;top:120.5px" width="8" height="8" viewBox="0 0 8 8"><rect x="2.6" y="3.4" width="4.6" height="3.8" fill="#f0f0f0" stroke="#333" stroke-width="0.5"/><path d="M1,3.6 V2.2 A1.3,1.3 0 0 1 3.6,2.2 V3.4" fill="none" stroke="#f0f0f0" stroke-width="0.8"/></svg>
<div class="w btn" style="left:43px;top:129.1px;width:9.5px;height:11px;line-height:9px;border-radius:0;background:#8c8c8c"></div>
<svg class="a" style="left:43.8px;top:130.6px" width="8" height="8" viewBox="0 0 8 8"><rect x="2.6" y="3.4" width="4.6" height="3.8" fill="#f0f0f0" stroke="#333" stroke-width="0.5"/><path d="M1,3.6 V2.2 A1.3,1.3 0 0 1 3.6,2.2 V3.4" fill="none" stroke="#f0f0f0" stroke-width="0.8"/></svg>
<div class="w btn" style="left:43px;top:139.2px;width:9.5px;height:11px;line-height:9px;border-radius:0 0 2.5px 2.5px;background:#8c8c8c"></div>
<svg class="a" style="left:43.8px;top:140.7px" width="8" height="8" viewBox="0 0 8 8"><rect x="2.6" y="3.4" width="4.6" height="3.8" fill="#f0f0f0" stroke="#333" stroke-width="0.5"/><path d="M1,3.6 V2.2 A1.3,1.3 0 0 1 3.6,2.2 V3.4" fill="none" stroke="#f0f0f0" stroke-width="0.8"/></svg>
<div class="sep" style="left:2px;top:152px;width:52px;background:#686868"></div>
<div class="sep" style="left:2px;top:153px;width:52px;background:#7b7b7b"></div>
<div class="tri" style="left:6px;top:157px"></div>
<div class="chk" style="left:12.5px;top:155.5px"><svg class="a" style="left:-1px;top:-2.5px" width="9" height="9" viewBox="0 0 9 9"><path d="M1.8,4.6 L3.6,6.6 L7.6,1.2" fill="none" stroke="#eee" stroke-width="1.3"/></svg></div>
<div class="t" style="left:24px;top:155.5px;font-size:5.8px;width:30.5px;overflow:hidden;">Grease Pen</div>
<div class="w menu" style="left:4.5px;top:171px;width:14px;height:10.5px;line-height:8.5px;border-radius:2.5px 0 0 2.5px"></div>
<svg class="a" style="left:6px;top:172.5px" width="8" height="8" viewBox="0 0 8 8"><path d="M1,7 L1.6,5 L6,0.8 L7.2,2 L3,6.4 Z" fill="#d8c23a" stroke="#222" stroke-width="0.4"/><path d="M1,7 L1.6,5 L3,6.4 Z" fill="#e8b8a0"/><path d="M5.2,1.5 L6.5,2.8" stroke="#c03030" stroke-width="0.8"/></svg>
<div class="ud" style="left:14.5px;top:172px"></div>
<div class="w btn" style="left:18px;top:171px;width:34px;height:10.5px;line-height:8.5px;border-radius:0 2.5px 2.5px 0"></div>
<svg class="a" style="left:20.5px;top:172.5px" width="8" height="8" viewBox="0 0 8 8"><rect x="1" y="0.6" width="5.6" height="6.4" fill="#e8e8e8" stroke="#444" stroke-width="0.4" stroke-dasharray="0.8 0.6"/><path d="M3.8,2 V5.6 M2,3.8 H5.6" stroke="#222" stroke-width="0.8"/></svg>
<div class="t" style="left:33px;top:172.5px;">New</div>
<div class="w btn" style="left:4.5px;top:183px;width:47.5px;height:10.5px;line-height:8.5px;">New Layer</div>
<div class="w btn" style="left:4.5px;top:194.5px;width:25px;height:10.5px;line-height:8.5px;border-radius:2.5px 0 0 2.5px;background:#7c7c7c;color:#555;border-color:#505050">Delete F</div>
<div class="w btn" style="left:28.5px;top:194.5px;width:23.5px;height:10.5px;line-height:8.5px;border-radius:0 2.5px 2.5px 0;background:#7c7c7c;color:#555;border-color:#505050">Convert</div>
<div class="sep" style="left:2px;top:206.5px;width:52px;background:#686868"></div>
<div class="sep" style="left:2px;top:207.5px;width:52px;background:#7b7b7b"></div>
<div class="tri" style="left:6px;top:212px"></div>
<div class="t" style="left:13px;top:210.5px;font-size:5.8px;">View</div>
<div class="grip" style="left:42.5px;top:209.5px"></div>
<div class="w num" style="left:4.5px;top:224px;width:47.5px;height:11.1px;line-height:9.1px;border-radius:5px;"><b class="al"></b><b class="ar"></b>Len: 35.000</div>
<div class="t" style="left:8px;top:236.5px;">Lock to Object:</div>
<div class="w txt" style="left:4.5px;top:245.5px;width:47.5px;height:10.5px;line-height:8.5px;"></div>
<svg class="a" style="left:6.5px;top:247.3px;opacity:1" width="7" height="7" viewBox="0 0 7 7"><path d="M3.5,0.3 L6.6,1.6 V5.3 L3.5,6.7 L0.4,5.3 V1.6 Z" fill="#e88a30" stroke="#8a4a10" stroke-width="0.4"/><path d="M0.4,1.6 L3.5,3 L6.6,1.6 M3.5,3 V6.7" fill="none" stroke="#fbd9a8" stroke-width="0.5"/></svg>
<div class="chk" style="left:5px;top:258.5px"></div>
<div class="t" style="left:17px;top:259px;">Lock to Cu...</div>
<div class="chk" style="left:5px;top:270.5px"></div>
<div class="t" style="left:17px;top:271px;">Lock Came...</div>
<div class="t" style="left:8px;top:283.5px;">Clip:</div>
<div class="w num" style="left:4.5px;top:292px;width:47.5px;height:11.1px;line-height:9.1px;border-radius:5px 5px 0 0;"><b class="al"></b><b class="ar"></b>Start:&nbsp; 0.100</div>
<div class="w num" style="left:4.5px;top:302.1px;width:47.5px;height:11.1px;line-height:9.1px;border-radius:0 0 5px 5px;"><b class="al"></b><b class="ar"></b>E: 1000.000</div>
<div class="t" style="left:8px;top:313.5px;color:#555;">Local Camera:</div>
<div class="w txt" style="left:4.5px;top:322px;width:47.5px;height:10.5px;line-height:8.5px;background:#7e7e7e;border-color:#5a5a5a"></div>
<svg class="a" style="left:6.5px;top:323.8px;opacity:0.6" width="7" height="7" viewBox="0 0 7 7"><path d="M3.5,0.3 L6.6,1.6 V5.3 L3.5,6.7 L0.4,5.3 V1.6 Z" fill="#e88a30" stroke="#8a4a10" stroke-width="0.4"/><path d="M0.4,1.6 L3.5,3 L6.6,1.6 M3.5,3 V6.7" fill="none" stroke="#fbd9a8" stroke-width="0.5"/></svg>
<div class="t" style="left:16px;top:323.3px;color:#555;">Camera</div>
<svg class="a" style="left:45px;top:324px" width="7" height="7" viewBox="0 0 7 7"><rect x="0.3" y="0.3" width="6.4" height="6.4" fill="#a4a4a4"/><path d="M1.2,1.2 L5.8,5.8 M5.8,1.2 L1.2,5.8" stroke="#6e6e6e" stroke-width="0.9"/></svg>
<div class="chk" style="left:5.5px;top:334.5px"></div>
<div class="t" style="left:17px;top:335.5px;">Render Bor...</div>
<div class="sep" style="left:2px;top:348.5px;width:52px;background:#686868"></div>
<div class="sep" style="left:2px;top:349.5px;width:52px;background:#7b7b7b"></div>
<div class="tri" style="left:6px;top:352px"></div>
<div class="t" style="left:13px;top:350.7px;font-size:5.8px;">3D Cursor</div>
<div class="grip" style="left:42.5px;top:350px"></div>
<div class="t" style="left:8px;top:366.3px;">Location:</div>
<div class="w num" style="left:4.5px;top:375px;width:47.5px;height:11.1px;line-height:9.1px;border-radius:5px 5px 0 0;"><b class="al"></b><b class="ar"></b>X:&nbsp;&nbsp;&nbsp;&nbsp; -8.4169</div>
<div class="w num" style="left:4.5px;top:385.1px;width:47.5px;height:11.1px;line-height:9.1px;border-radius:0;"><b class="al"></b><b class="ar"></b>Y:&nbsp;&nbsp;&nbsp;&nbsp; 20.8428</div>
<div class="w num" style="left:4.5px;top:395.2px;width:47.5px;height:11.1px;line-height:9.1px;border-radius:0 0 5px 5px;"><b class="al"></b><b class="ar"></b>Z:&nbsp;&nbsp; -15.2720</div>
<div class="sep" style="left:2px;top:408.5px;width:52px;background:#686868"></div>
<div class="sep" style="left:2px;top:409.5px;width:52px;background:#7b7b7b"></div>
<div class="tri" style="left:6px;top:412px"></div>
<div class="t" style="left:13px;top:410.7px;font-size:5.8px;">Item</div>
<div class="grip" style="left:42.5px;top:410px"></div>
<svg class="a" style="left:6.5px;top:426px;opacity:1" width="7" height="7" viewBox="0 0 7 7"><path d="M3.5,0.3 L6.6,1.6 V5.3 L3.5,6.7 L0.4,5.3 V1.6 Z" fill="#e88a30" stroke="#8a4a10" stroke-width="0.4"/><path d="M0.4,1.6 L3.5,3 L6.6,1.6 M3.5,3 V6.7" fill="none" stroke="#fbd9a8" stroke-width="0.5"/></svg>
<div class="w txt" style="left:18px;top:424px;width:34px;height:10.5px;line-height:8.5px;background:#a0a0a0">Spot_up</div>
<div class="sep" style="left:2px;top:438.5px;width:52px;background:#686868"></div>
<div class="sep" style="left:2px;top:439.5px;width:52px;background:#7b7b7b"></div>
<div class="trir" style="left:6.5px;top:442px"></div>
<div class="t" style="left:13px;top:440.7px;font-size:5.8px;">Display</div>
<div class="grip" style="left:42.5px;top:440px"></div>
<div class="sep" style="left:2px;top:450.5px;width:52px;background:#686868"></div>
<div class="sep" style="left:2px;top:451.5px;width:52px;background:#7b7b7b"></div>
<div class="tri" style="left:6px;top:454px"></div>
<div class="t" style="left:13px;top:452.7px;font-size:5.8px;">Shading</div>
<div class="grip" style="left:42.5px;top:452px"></div>
<div class="w menu" style="left:4.5px;top:466px;width:47.5px;height:10.5px;line-height:8.5px;"></div>
<div class="t" style="left:8px;top:467.3px;color:#fff;">GLSL</div>
<div class="ud" style="left:47px;top:467px"></div>
</div>
</body></html>
